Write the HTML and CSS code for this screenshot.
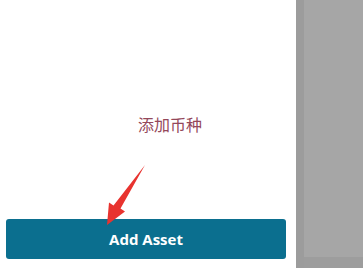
FILE: index.html
```html
<!DOCTYPE html>
<html lang="zh-CN">
<head>
    <meta charset="UTF-8">
    <title>Add Asset</title>
    <link rel="stylesheet" href="styles.css">
</head>
<body>
    <div class="screen">
        <div class="panel">
            <div class="hint">添加币种</div>
            <svg class="pointer" width="296" height="268" viewBox="0 0 296 268">
                <polygon points="145,165 120.5,208.5 125,211.5 107,225 109,202.5 113.5,205.5" fill="#e8332f"/>
            </svg>
            <button class="add-btn">Add Asset</button>
        </div>
        <div class="backdrop">
            <div class="backdrop-edge"></div>
            <div class="backdrop-main">
                <div class="backdrop-foot"></div>
            </div>
        </div>
    </div>
</body>
</html>
```

FILE: styles.css
```css
body {
    margin: 0;
    padding: 0;
    font-family: "Open Sans", "Noto Sans CJK SC", sans-serif;
    background: #ffffff;
}

.screen {
    display: flex;
    width: 363px;
    height: 268px;
    overflow: hidden;
}

.panel {
    position: relative;
    width: 296px;
    flex-shrink: 0;
    background: #ffffff;
    display: flex;
    flex-direction: column;
    box-sizing: border-box;
    padding: 0 10px 9px 6px;
}

.hint {
    margin-top: 114px;
    margin-left: 132px;
    font-family: "Noto Sans CJK SC", sans-serif;
    font-size: 16px;
    line-height: 20px;
    color: #94485a;
}

.pointer {
    position: absolute;
    top: 0;
    left: 0;
}

.add-btn {
    margin-top: auto;
    height: 40px;
    width: 100%;
    border: none;
    border-radius: 3px;
    background: #0b6f8f;
    color: #ffffff;
    font-family: "Open Sans", sans-serif;
    font-weight: 700;
    font-size: 15px;
    padding: 0;
}

.backdrop {
    flex: 1;
    display: flex;
}

.backdrop-edge {
    width: 8px;
    background: #9c9c9c;
}

.backdrop-main {
    flex: 1;
    background: #a6a6a6;
    display: flex;
    align-items: flex-end;
}

.backdrop-foot {
    width: 100%;
    height: 11px;
    background: #9d9d9d;
}
```
